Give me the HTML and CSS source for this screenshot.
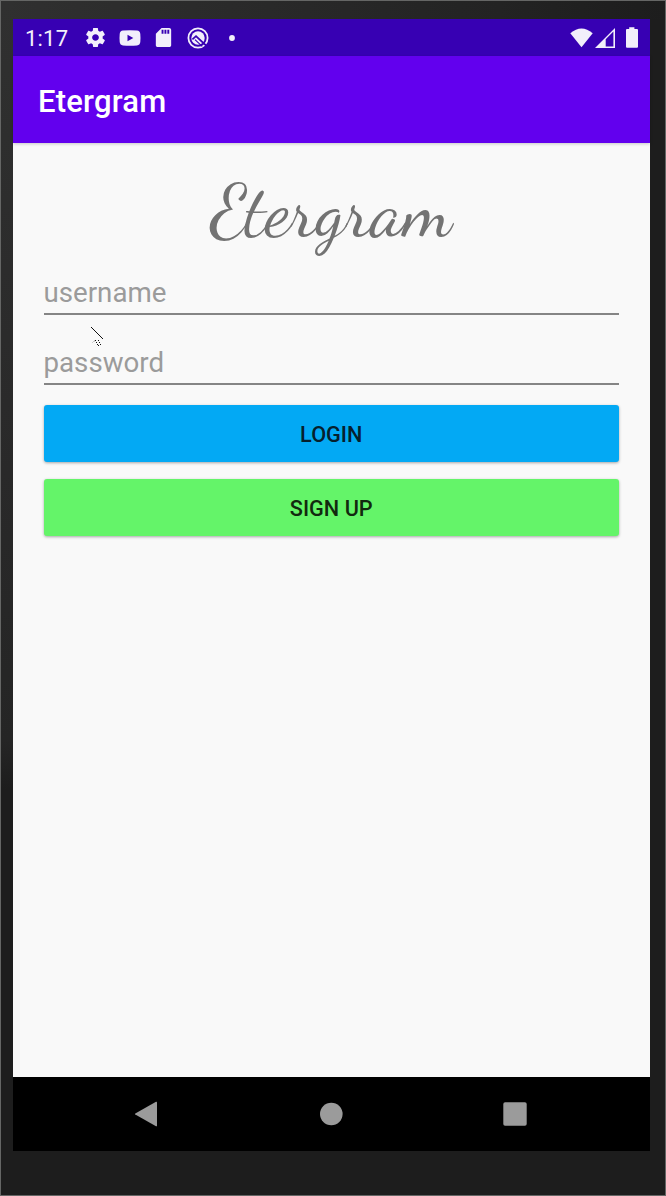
FILE: index.html
```html
<!DOCTYPE html>
<html lang="en">
<head>
<meta charset="utf-8">
<title>Etergram</title>
<link rel="stylesheet" href="styles.css">
</head>
<body>
<div class="device">
  <main class="screen">
    <div class="status">
      <span class="clock">1:17</span>
      <div class="notifications">
        <svg width="23" height="23" viewBox="0 0 24 24"><path d="M19.43 12.98c.04-.32.07-.64.07-.98s-.03-.66-.07-.98l2.11-1.65c.19-.15.24-.42.12-.64l-2-3.46c-.12-.22-.39-.3-.61-.22l-2.49 1c-.52-.4-1.08-.73-1.69-.98l-.38-2.65C14.46 2.18 14.25 2 14 2h-4c-.25 0-.46.18-.49.42l-.38 2.65c-.61.25-1.17.59-1.69.98l-2.49-1c-.23-.09-.49 0-.61.22l-2 3.46c-.13.22-.07.49.12.64l2.11 1.65c-.04.32-.07.65-.07.98s.03.66.07.98l-2.11 1.65c-.19.15-.24.42-.12.64l2 3.46c.12.22.39.3.61.22l2.49-1c.52.4 1.08.73 1.69.98l.38 2.65c.03.24.24.42.49.42h4c.25 0 .46-.18.49-.42l.38-2.65c.61-.25 1.17-.59 1.69-.98l2.49 1c.23.09.49 0 .61-.22l2-3.46c.12-.22.07-.49-.12-.64l-2.11-1.65zM12 15.5c-1.93 0-3.5-1.57-3.5-3.5s1.57-3.5 3.5-3.5 3.5 1.57 3.5 3.5-1.57 3.5-3.5 3.5z"/></svg>
        <svg class="video" width="22" height="16" viewBox="0 0 22 16"><path fill-rule="evenodd" d="M4 .6Q11 0 18 .6Q21 .9 21.3 4Q21.7 8 21.3 12Q21 15.1 18 15.4Q11 16 4 15.4Q1 15.1.7 12Q.3 8 .7 4Q1 .9 4 .6zM8.5 4.8v6.4l5.8-3.2z"/></svg>
        <svg class="card" width="23" height="23" viewBox="0 0 24 24"><path d="M18 2h-8L4.02 8 4 20c0 1.1.9 2 2 2h12c1.1 0 2-.9 2-2V4c0-1.1-.9-2-2-2zm-6 6h-2V4h2v4zm3 0h-2V4h2v4zm3 0h-2V4h2v4z"/></svg>
        <svg class="query" width="22" height="22" viewBox="0 0 22 22"><circle class="ring" cx="11" cy="11" r="9.6"/><circle cx="11" cy="11" r="6.7"/><path class="cut" d="M5.4 12.4L9 9.2L19.6 19"/><path class="cut thin" d="M8 12.6L15.2 19.4"/></svg>
        <svg class="more" width="6" height="6" viewBox="0 0 6 6"><circle cx="3" cy="3" r="2.9"/></svg>
      </div>
      <div class="system">
        <svg width="23" height="20" viewBox="0 0 23 20"><path d="M.3 5.2Q11.5-4.3 22.7 5.2L11.5 19.2z"/></svg>
        <svg width="20" height="20" viewBox="0 0 20 20"><path fill-rule="evenodd" d="M0 20L20 0V20zM10.7 11.2V18.4H18.4V3.5z"/></svg>
        <svg class="battery" width="12" height="21" viewBox="0 0 12 21"><path d="M3.2 2V.3h5.2V2H11q1 0 1 1V19.8q0 1-1 1H1q-1 0-1-1V3q0-1 1-1z"/></svg>
      </div>
    </div>
    <header class="appbar">Etergram</header>
    <form class="login">
      <h1 class="brand">Etergram</h1>
      <input class="field" type="text" placeholder="username">
      <input class="field second" type="password" placeholder="password">
      <button class="btn blue" type="button">LOGIN</button>
      <button class="btn green" type="button">SIGN UP</button>
    </form>
    <nav class="navbar">
      <svg width="24" height="26" viewBox="0 0 24 26"><path d="M22 .8Q23 .3 23 1.5V24.5Q23 25.7 22 25.2L1.3 13.6Q.5 13 1.3 12.4z"/></svg>
      <svg width="24" height="24" viewBox="0 0 24 24"><circle cx="12.3" cy="12" r="11.3"/></svg>
      <svg width="24" height="24" viewBox="0 0 24 24"><rect x=".3" y=".3" width="23.4" height="23.4" rx="1.8"/></svg>
    </nav>
  </main>
  <svg class="pointer" width="14" height="20" viewBox="0 0 14 20"><path d="M.5.5L12 12"/><path class="dots" d="M4 13h1v1h-1zM5 15h1v1h-1zM6 17h1v1h-1zM7 18h1v1h-1zM7 13h1v1h-1zM8 15h1v1h-1zM9 17h1v1h-1z"/><path class="faint" d="M1 16L4 13.5"/></svg>
</div>
</body>
</html>
```
FILE: styles.css
```css
* { box-sizing: border-box; }
body { margin: 0; font-family: Roboto, sans-serif; }
svg { display: block; fill: currentColor; flex: none; }

.device {
  position: relative;
  width: 666px;
  height: 1196px;
  padding: 18px 15px 44px 12px;
  border: 1px solid #656665;
  background: linear-gradient(#303030, #252525 62%, #1d1d1d 66%) left / 12px 100% no-repeat,
    linear-gradient(90deg, #303030, #232323 75%, #1d1d1d) top / 100% 18px no-repeat,
    #1d1d1d;
}
.screen {
  display: flex;
  flex-direction: column;
  width: 637px;
  height: 1132px;
  background: #f9f9f9;
}

.status {
  display: flex;
  align-items: center;
  height: 37px;
  padding: 0 12px 0 12px;
  background: #3700b3;
  color: #f2effb;
}
.clock { width: 59px; font-size: 22px; letter-spacing: .2px; padding-top: 2px; }
.notifications { display: flex; align-items: center; }
.video { margin-left: 12px; }
.card { margin-left: 11px; }
.query { margin-left: 12px; }
.more { margin-left: 20px; }
.ring { fill: none; stroke: currentColor; stroke-width: 1.8; }
.cut { fill: none; stroke: #3700b3; stroke-width: 1.8; }
.thin { stroke-width: 1.2; }
.system { display: flex; align-items: center; gap: 2px; margin-left: auto; }
.battery { margin-left: 9px; }

.appbar {
  display: flex;
  align-items: center;
  height: 87px;
  padding: 3px 25px 0;
  background: #6200ee;
  color: #fff;
  font-size: 31px;
  font-weight: 500;
  letter-spacing: .2px;
  box-shadow: 0 1px 3px #0003;
}

.login {
  flex: 1;
  display: flex;
  flex-direction: column;
  padding: 24px 31px 0 30.5px;
}
.brand {
  height: 98px;
  margin: 0;
  color: #737373;
  font-family: "Dancing Script", "Liberation Serif", serif;
  font-weight: 400;
  font-size: 74.4px;
  line-height: 90px;
  text-align: center;
}
.field {
  height: 50px;
  padding: 7px 0 0;
  border: 0;
  border-bottom: 2px solid #858585;
  border-radius: 0;
  background: none;
  outline: 0;
  font: 27.7px Roboto, sans-serif;
}
.field::placeholder { color: #9b9b9b; opacity: 1; }
.second { margin-top: 20px; }
.btn {
  height: 57px;
  border: 0;
  border-radius: 3px;
  padding: 2px 0 0;
  font: 500 21.7px Roboto, sans-serif;
  box-shadow: 0 1px 3px #0005;
}
.blue { margin-top: 20px; background: #03a9f4; color: #06202d; }
.green { margin-top: 17px; background: #64f469; color: #12290f; }

.navbar {
  display: flex;
  align-items: center;
  justify-content: space-between;
  height: 74px;
  padding: 0 123px 0 121px;
  background: #000;
  color: #9b9b9b;
}

.pointer { position: absolute; left: 90px; top: 326px; fill: none; stroke: #111; stroke-width: 1; }
.pointer .dots { fill: #111; stroke: none; }
.pointer .faint { stroke: #ccc; }
.pointer path { shape-rendering: crispEdges; }
```
